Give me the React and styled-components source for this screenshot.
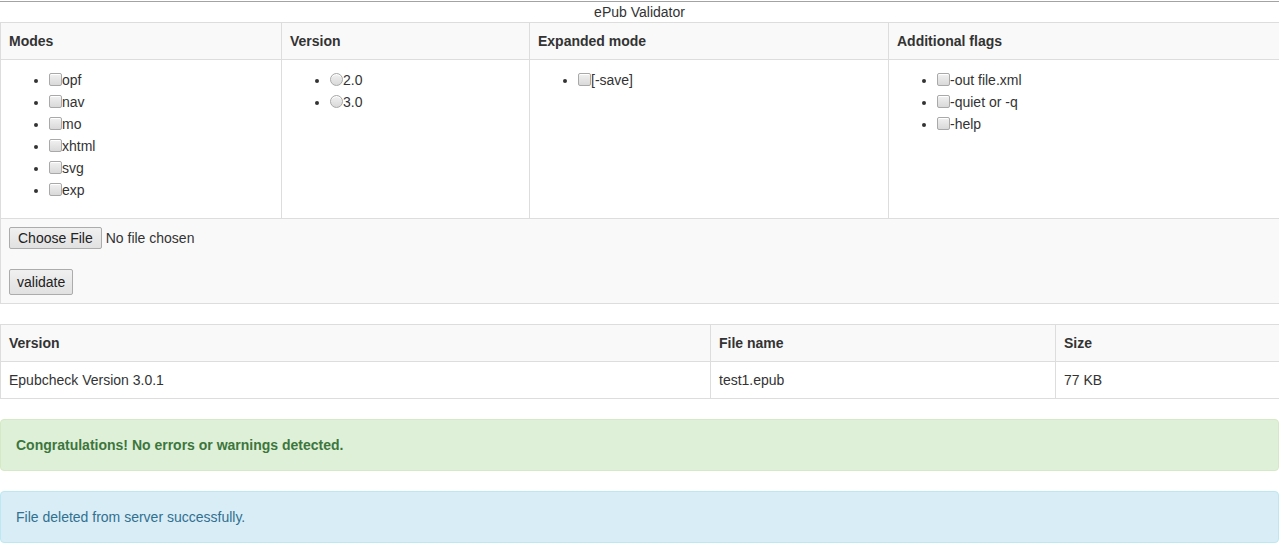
import React from 'react';
import styled, { createGlobalStyle } from 'styled-components';

const GlobalStyle = createGlobalStyle`
  html, body {
    margin: 0;
    padding: 0;
    background: #fff;
  }
  body {
    padding-top: 1px;
    font-family: "Liberation Sans", Arial, Helvetica, sans-serif;
    font-size: 14px;
    line-height: 20px;
    color: #333;
    overflow: hidden;
  }
  * {
    box-sizing: border-box;
  }
`;

const Page = styled.div`
  border-top: 1px solid #a3a3a3;
`;

const Title = styled.div`
  text-align: center;
  height: 20px;
  line-height: 20px;
`;

const Table = styled.table`
  width: 100%;
  table-layout: fixed;
  border-collapse: collapse;
  border-spacing: 0;
  border: 1px solid #ddd;
  border-right: none;
  margin-bottom: 20px;
`;

const Row = styled.tr`
  background: ${(p) => (p.$striped ? '#f9f9f9' : '#fff')};
`;

const HeadCell = styled.th`
  text-align: left;
  font-weight: bold;
  padding: 8px;
  line-height: 20px;
  border: 1px solid #ddd;
  vertical-align: top;
  &:last-child {
    border-right: none;
  }
`;

const Cell = styled.td`
  padding: 8px;
  line-height: 20px;
  border: 1px solid #ddd;
  vertical-align: top;
  &:last-child {
    border-right: none;
  }
`;

const OptionList = styled.ul`
  margin: 0 0 9px;
  padding: 1px 0 0 40px;
  list-style: disc;
`;

const OptionItem = styled.li`
  height: 22px;
  line-height: 22px;
`;

const Label = styled.label`
  cursor: default;
`;

const Box = styled.input`
  appearance: none;
  -webkit-appearance: none;
  margin: 0;
  width: 13px;
  height: 13px;
  vertical-align: -1px;
  border: 1px solid #a9a9a9;
  border-radius: ${(p) => (p.type === 'radio' ? '50%' : '2px')};
  background: linear-gradient(#f1f1f1, #d9d9d9);
  box-shadow: inset 0 1px 0 #fff;
`;

const ToolButton = styled.button`
  font-family: "Liberation Sans", Arial, sans-serif;
  font-size: 14px;
  line-height: ${(p) => (p.$tall ? '24px' : '20px')};
  color: #222;
  padding: 0 ${(p) => (p.$tall ? '7px' : '8px')};
  margin: 0;
  border: 1px solid #acacac;
  border-radius: 2px;
  background: linear-gradient(#f0f0f0, #e1e1e1);
  cursor: pointer;
`;

const FileRow = styled.div`
  display: flex;
  align-items: center;
  gap: 4px;
  height: 22px;
`;

const ActionRow = styled.div`
  margin-top: 20px;
`;

const Alert = styled.div`
  padding: 15px;
  margin-bottom: 20px;
  border: 1px solid ${(p) => (p.$variant === 'success' ? '#d6e9c6' : '#bce8f1')};
  border-radius: 4px;
  background: ${(p) => (p.$variant === 'success' ? '#dff0d8' : '#d9edf7')};
  color: ${(p) => (p.$variant === 'success' ? '#3c763d' : '#31708f')};
  font-weight: ${(p) => (p.$variant === 'success' ? 'bold' : 'normal')};
`;

const modes = ['opf', 'nav', 'mo', 'xhtml', 'svg', 'exp'];
const versions = ['2.0', '3.0'];
const flags = ['-out file.xml', '-quiet or -q', '-help'];

const Options = ({ items, type = 'checkbox', name }) => (
  <OptionList>
    {items.map((item) => (
      <OptionItem key={item}>
        <Label>
          <Box type={type} name={name} />
          {item}
        </Label>
      </OptionItem>
    ))}
  </OptionList>
);

const App = () => (
  <Page>
    <GlobalStyle />
    <Title>ePub Validator</Title>

    <Table>
      <colgroup>
        <col style={{ width: 281 }} />
        <col style={{ width: 248 }} />
        <col style={{ width: 359 }} />
        <col />
      </colgroup>
      <tbody>
        <Row $striped>
          <HeadCell>Modes</HeadCell>
          <HeadCell>Version</HeadCell>
          <HeadCell>Expanded mode</HeadCell>
          <HeadCell>Additional flags</HeadCell>
        </Row>
        <Row>
          <Cell>
            <Options items={modes} />
          </Cell>
          <Cell>
            <Options items={versions} type="radio" name="version" />
          </Cell>
          <Cell>
            <Options items={['[-save]']} />
          </Cell>
          <Cell>
            <Options items={flags} />
          </Cell>
        </Row>
        <Row $striped>
          <Cell colSpan={4}>
            <FileRow>
              <ToolButton type="button">Choose File</ToolButton>
              <span>No file chosen</span>
            </FileRow>
            <ActionRow>
              <ToolButton type="button" $tall>validate</ToolButton>
            </ActionRow>
          </Cell>
        </Row>
      </tbody>
    </Table>

    <Table>
      <colgroup>
        <col style={{ width: 710 }} />
        <col style={{ width: 345 }} />
        <col />
      </colgroup>
      <tbody>
        <Row $striped>
          <HeadCell>Version</HeadCell>
          <HeadCell>File name</HeadCell>
          <HeadCell>Size</HeadCell>
        </Row>
        <Row>
          <Cell>Epubcheck Version 3.0.1</Cell>
          <Cell>test1.epub</Cell>
          <Cell>77 KB</Cell>
        </Row>
      </tbody>
    </Table>

    <Alert $variant="success">Congratulations! No errors or warnings detected.</Alert>
    <Alert $variant="info">File deleted from server successfully.</Alert>
  </Page>
);

export default App;
